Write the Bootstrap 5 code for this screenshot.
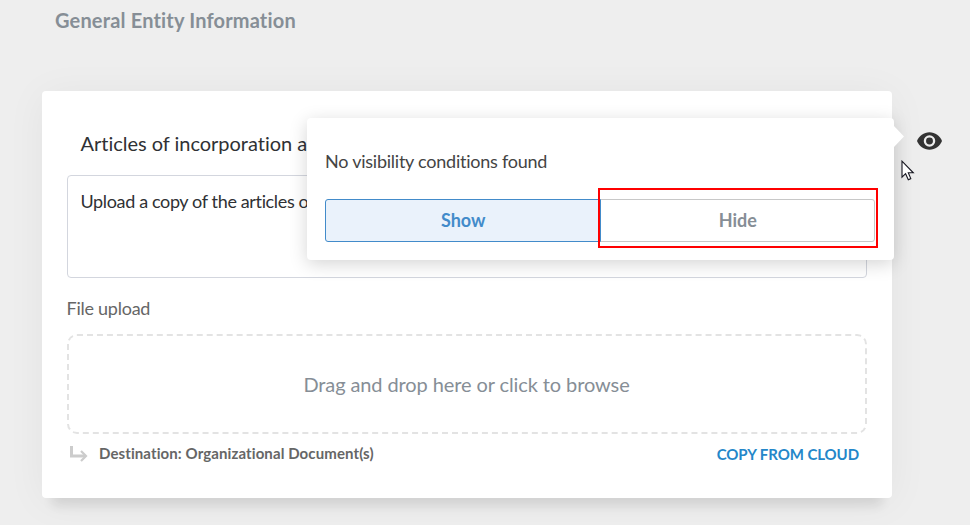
<!DOCTYPE html>
<html lang="en">
<head>
<meta charset="utf-8">
<meta name="viewport" content="width=device-width, initial-scale=1">
<title>General Entity Information</title>
<link href="https://cdn.jsdelivr.net/npm/bootstrap@5.3.0/dist/css/bootstrap.min.css" rel="stylesheet">
<style>
body { font-family: Lato, "Liberation Sans", sans-serif; font-variant-ligatures: none; background: #eee; color: #2f3134; height: 525px; overflow: hidden; }
.page-title { font-size: 20px; line-height: 24px; letter-spacing: .17px; color: #868e96; padding: 8px 0 0 55px; margin-bottom: 59px; }
.entity-card { width: 850px; height: 407px; margin-left: 42px; padding: 37px 25px 0; border-radius: 4px; box-shadow: 0 18px 10px -10px rgba(0,0,0,.09), 0 4px 40px rgba(0,0,0,.05); }
.question { font-size: 20px; line-height: 30px; letter-spacing: -.02px; padding-left: 13.5px; margin-bottom: 17px; }
.note-box { height: 103px; border: 1px solid #d3d6de; border-radius: 4px; padding: 12px 12.5px 0; font-size: 18px; line-height: 26px; letter-spacing: -.36px; }
.upload-label { font-size: 18px; line-height: 24px; letter-spacing: -.25px; color: #666; margin-top: 18px; margin-bottom: 14px; margin-left: -.5px; }
.drop-zone { height: 100px; border: 2px dashed #e3e3e3; border-radius: 10px; font-size: 20px; letter-spacing: -.1px; color: #868e96; padding-right: 1px; }
.destination { font-size: 15px; line-height: 20px; letter-spacing: .1px; color: #666; margin-top: -3px; }
.cloud-link { font-size: 15px; line-height: 20px; letter-spacing: -.08px; color: #2487c9; padding-right: 8px; margin-top: -2px; }
.visibility-pop { left: 307px; top: 118px; width: 587px; height: 142px; border-radius: 4px; padding: 30px 19px 0 18px; box-shadow: 0 4px 18px rgba(0,0,0,.17); }
.pop-arrow { left: 587px; top: 8px; width: 10px; height: 21px; background: #fff; clip-path: polygon(0 0, 100% 50%, 0 100%); }
.pop-text { font-size: 18px; line-height: 26px; letter-spacing: -.24px; color: #444; margin-bottom: 25px; }
.choice { height: 43px; border-radius: 3px; font-size: 18px; line-height: 26px; padding: 0 0 2px 1px; font-weight: 700; }
.choice-show, .choice-show:hover { background: #eaf2fb; border-color: #428bca; color: #428bca; z-index: 1; }
.choice-hide, .choice-hide:hover { background: #fff; border-color: #c8c8c8; color: #868e96; }
.highlight { left: 598px; top: 188px; width: 280px; height: 60px; border: 2px solid #f00; z-index: 5; }
.eye { left: 917px; top: 132px; }
.pointer { left: 901px; top: 160px; }
</style>
<script src="https://cdn.jsdelivr.net/npm/bootstrap@5.3.0/dist/js/bootstrap.bundle.min.js"></script>
</head>
<body class="position-relative">
<h1 class="page-title fw-bold">General Entity Information</h1>

<main class="entity-card bg-white">
  <h2 class="question fw-normal">Articles of incorporation a</h2>
  <div class="note-box bg-white">Upload a copy of the articles o</div>
  <div class="upload-label">File upload</div>
  <div class="drop-zone d-flex align-items-center justify-content-center">Drag and drop here or click to browse</div>
  <div class="d-flex justify-content-between mt-2 pt-1">
    <div class="destination d-flex fw-bold">
      <svg class="me-2" width="24" height="20" viewBox="0 0 24 20" fill="none" stroke="#ccc"><path d="M4.500 3v10H18" stroke-width="3"/><path d="M14 8l5 5-5 5" stroke-width="2.200"/></svg>
      <span>Destination: Organizational Document(s)</span>
    </div>
    <a class="cloud-link fw-bold text-decoration-none" href="#">COPY FROM CLOUD</a>
  </div>
</main>

<div class="visibility-pop position-absolute bg-white">
  <div class="pop-arrow position-absolute"></div>
  <p class="pop-text">No visibility conditions found</p>
  <div class="btn-group d-flex" role="group">
    <button type="button" class="btn choice choice-show w-50">Show</button>
    <button type="button" class="btn choice choice-hide w-50">Hide</button>
  </div>
</div>
<div class="highlight position-absolute"></div>

<svg class="eye position-absolute" width="25" height="18" viewBox="0 0 25 18"><path fill="#333" d="M12.500.3C6.800.3 2 3.800 0 9c2 5.200 6.800 8.700 12.500 8.700S23 14.200 25 9C23 3.800 18.200.3 12.500.3z"/><circle cx="12.500" cy="9" r="4.600" fill="#333" stroke="#eee" stroke-width="2.300"/></svg>
<svg class="pointer position-absolute" width="14" height="21" viewBox="0 0 14 21"><path d="M1 1.200v16l3.600-3.500 2.700 6 2.500-1.100-2.500-5.800h5z" fill="#fff" stroke="#15151f" stroke-width="1.100"/></svg>
</body>
</html>
